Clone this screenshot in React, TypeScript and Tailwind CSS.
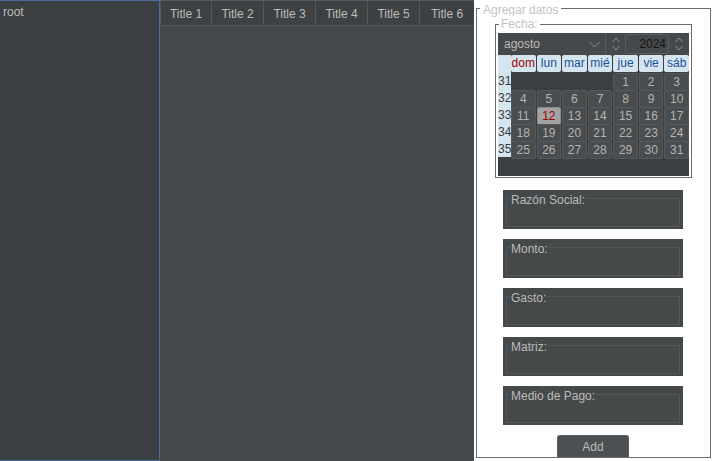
import React from "react";

const weeks: { n: number; days: (number | null)[] }[] = [
  { n: 31, days: [null, null, null, null, 1, 2, 3] },
  { n: 32, days: [4, 5, 6, 7, 8, 9, 10] },
  { n: 33, days: [11, 12, 13, 14, 15, 16, 17] },
  { n: 34, days: [18, 19, 20, 21, 22, 23, 24] },
  { n: 35, days: [25, 26, 27, 28, 29, 30, 31] },
];

const dayNames = ["dom", "lun", "mar", "mié", "jue", "vie", "sáb"];
const titles = ["Title 1", "Title 2", "Title 3", "Title 4", "Title 5", "Title 6"];
const fields = ["Razón Social:", "Monto:", "Gasto:", "Matriz:", "Medio de Pago:"];

function Spinner() {
  return (
    <svg width="10" height="18" viewBox="0 0 10 18" fill="none" stroke="#8e9193" strokeWidth="1">
      <path d="M1.5 7 L5 3 L8.5 7" />
      <path d="M1.5 11 L5 15 L8.5 11" />
    </svg>
  );
}

function Calendar() {
  return (
    <div className="w-[191px] h-[143px] bg-[#3c3f41] flex flex-col">
      <div className="h-[22px] flex bg-[#46494b]">
        <div className="w-[107px] flex items-center justify-between pl-[6px] pr-[5px] text-[12px] text-[#bbbbbb]">
          <span>agosto</span>
          <svg width="11" height="7" viewBox="0 0 11 7" fill="none" stroke="#8e9193" strokeWidth="1">
            <path d="M0.5 1 L5.5 6 L10.5 1" />
          </svg>
        </div>
        <div className="w-[20px] border-l border-[#5b5e60] flex items-center justify-center">
          <Spinner />
        </div>
        <div className="w-[44px] my-px border border-[#5b5e60] rounded-[3px] flex items-center justify-end pr-[2px] text-[12px] text-[#161616]">
          2024
        </div>
        <div className="w-[20px] flex items-center justify-center">
          <Spinner />
        </div>
      </div>
      <div className="flex">
        <div className="w-[13px] bg-[#d5e5ef] flex flex-col text-[12px] text-[#3a3a3a]">
          <div className="h-[17px]" />
          {weeks.map((w) => (
            <div key={w.n} className="h-[17px] leading-[19px] overflow-hidden">
              {w.n}
            </div>
          ))}
        </div>
        <div className="flex-1 flex flex-col">
          <div className="h-[17px] grid grid-cols-7 gap-px bg-[#3c3f41]">
            {dayNames.map((d, i) => (
              <div
                key={d}
                className={`bg-[#d5e5ef] rounded-[2px] text-center text-[12px] leading-[17px] ${
                  i === 0 ? "text-[#a00000]" : "text-[#1f4f9a]"
                }`}
              >
                {d}
              </div>
            ))}
          </div>
          {weeks.map((w) => (
            <div key={w.n} className="h-[17px] grid grid-cols-7 gap-px pt-px">
              {w.days.map((d, i) =>
                d === null ? (
                  <div key={i} />
                ) : (
                  <div
                    key={i}
                    className={`rounded-[2px] border text-center text-[12px] leading-[16px] ${
                      d === 12
                        ? "bg-[#a3a3a3] border-[#8a8a8a] text-[#a00000]"
                        : "bg-[#4a4d4f] border-[#56595b] text-[#b3b3b3]"
                    }`}
                  >
                    {d}
                  </div>
                )
              )}
            </div>
          ))}
        </div>
      </div>
    </div>
  );
}

function Field({ label }: { label: string }) {
  return (
    <div className="w-[180px] h-[39px] bg-[#45494a] px-[3px] pt-[8px] pb-[2px]">
      <div className="relative h-full border border-[#54585a]">
        <span className="absolute -top-[7px] left-[3px] bg-[#45494a] px-[1px] text-[12px] leading-[16px] text-[#bbbbbb] whitespace-nowrap">
          {label}
        </span>
      </div>
    </div>
  );
}

export default function App() {
  return (
    <div className="w-[713px] h-[461px] flex overflow-hidden font-['Liberation_Sans',Arial,sans-serif]">
      <div className="w-[160px] h-full bg-[#3c3f41] border-t border-r border-b border-[#4a6c9a] pl-[3px] pt-[3px] text-[12px] leading-[16px] text-[#bbbbbb]">
        root
      </div>

      <div className="w-[314px] h-full bg-[#45484a] flex flex-col">
        <div className="h-[26px] flex bg-[#3e4143] border-t border-b border-[#55595b]">
          {titles.map((t, i) => (
            <div
              key={t}
              className={`${i === 5 ? "flex-1" : "w-[52px] border-r border-[#55595b]"} ${
                i === 0 ? "border-l" : ""
              } flex items-center justify-center pt-px text-[12px] text-[#bbbbbb]`}
            >
              {t}
            </div>
          ))}
        </div>
      </div>

      <div className="w-[239px] h-full bg-white pl-[2px] pt-[8px]">
        <div className="relative w-[235px] h-[450px] border border-[#6b6b6b] flex flex-col items-start">
          <span className="absolute -top-[7px] left-[3px] bg-white px-[3px] text-[12px] leading-[16px] text-[#c4c4c4]">
            Agregar datos
          </span>

          <div className="relative ml-[18px] mt-[15px] w-[197px] h-[155px] border border-[#6b6b6b] pl-[2px] pt-[8px]">
            <span className="absolute -top-[9px] left-[3px] bg-white px-[2px] text-[12px] leading-[16px] text-[#c4c4c4]">
              Fecha:
            </span>
            <Calendar />
          </div>

          <div className="ml-[26px] mt-[12px] flex flex-col gap-[10px]">
            {fields.map((f) => (
              <Field key={f} label={f} />
            ))}
          </div>

          <div className="ml-[80px] mt-[10px] w-[72px] h-[22px] shrink-0 bg-[#4c5052] border-t border-x border-[#5c6062] rounded-t-[3px] flex items-center justify-center text-[12px] text-[#bbbbbb]">
            Add
          </div>
        </div>
      </div>
    </div>
  );
}
